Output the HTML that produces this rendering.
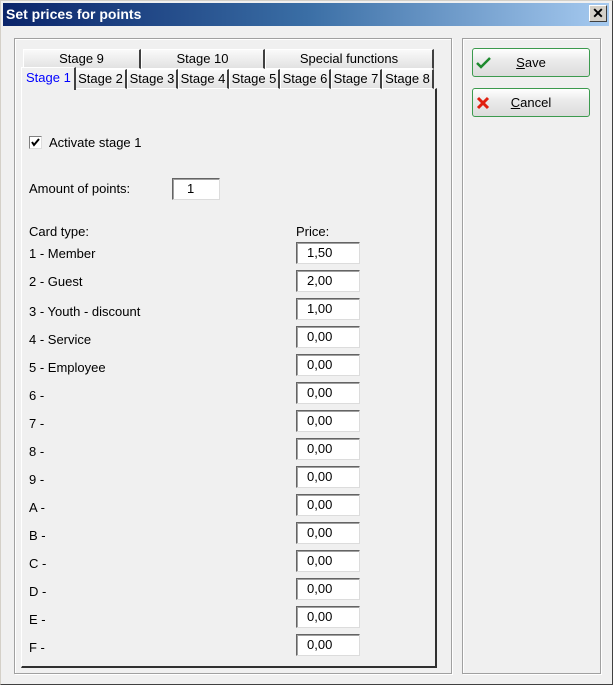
<!DOCTYPE html>
<html><head><style>
*{margin:0;padding:0;box-sizing:border-box}
body{width:613px;height:685px;background:#d4d0c8;font-family:"Liberation Sans",sans-serif;font-size:13px;color:#000;position:relative;overflow:hidden}
.a{position:absolute}
#win{left:0;top:0;width:613px;height:685px;background:#f0f0f0;border:1px solid #d4d0c8;border-right-color:#404040;border-bottom-color:#404040}
#title{left:3px;top:3px;width:606px;height:23px;background:linear-gradient(to right,#0a246a,#3a6ea5 50%,#a6caf0);color:#fff;font-weight:bold;font-size:14px;line-height:23px;padding-left:3px}
#close{left:589px;top:5px;width:18px;height:17px;background:#d4d0c8;border:1px solid #fff;border-right-color:#404040;border-bottom-color:#404040;color:#000;font-size:14px;font-weight:bold;text-align:center;line-height:14px}
.etch{border:1px solid #a0a0a0;box-shadow:1px 1px 0 #fff inset,1px 1px 0 #fff}
.tab{height:20px;background:linear-gradient(#fafafa,#e2e2e2);border:1px solid #fff;border-right:2px solid #404040;text-align:center;line-height:18px;font-size:13px;white-space:nowrap}
#page{left:21px;top:88px;width:416px;height:580px;border:1px solid #fff;border-right:2px solid #303030;border-bottom:2px solid #303030;background:#f0f0f0}
.inp{position:absolute;background:#fff;border:1px solid #dcdcdc;border-top-color:#646464;border-left-color:#646464;box-shadow:1px 1px 0 #a0a0a0 inset;font-size:13px;line-height:20px}
.lbl{position:absolute;left:29px;font-size:13px}
.btn{position:absolute;left:472px;width:118px;height:29px;border:1px solid #3c9a4e;border-radius:3px;background:linear-gradient(#fff,#ececec 40%,#dcdcdc);text-align:center;line-height:27px;font-size:13px}
</style></head><body>
<div id="win" class="a"></div>
<div id="title" class="a">Set prices for points</div>
<div id="close" class="a">✕</div>
<div class="a etch" style="left:14px;top:38px;width:438px;height:636px"></div>
<div class="a etch" style="left:462px;top:38px;width:139px;height:636px"></div>

<div class="a tab" style="left:23px;top:49px;width:118px">Stage 9</div>
<div class="a tab" style="left:141px;top:49px;width:124px">Stage 10</div>
<div class="a tab" style="left:265px;top:49px;width:169px">Special functions</div>
<div id="page" class="a"></div>
<div class="a tab" style="left:75px;top:69px;width:52px">Stage 2</div>
<div class="a tab" style="left:127px;top:69px;width:51px">Stage 3</div>
<div class="a tab" style="left:178px;top:69px;width:51px">Stage 4</div>
<div class="a tab" style="left:229px;top:69px;width:51px">Stage 5</div>
<div class="a tab" style="left:280px;top:69px;width:51px">Stage 6</div>
<div class="a tab" style="left:331px;top:69px;width:51px">Stage 7</div>
<div class="a tab" style="left:382px;top:69px;width:52px">Stage 8</div>
<div class="a" style="left:21px;top:67px;width:55px;height:23px;background:#f0f0f0;border:1px solid #fff;border-bottom:none;border-right:2px solid #404040;color:#0000ff;line-height:20px;padding-left:4px;white-space:nowrap">Stage 1</div>

<div class="a" style="left:29px;top:136px;width:13px;height:13px;background:#fff;border:1px solid #808080;border-right-color:#ddd;border-bottom-color:#ddd"><svg width="11" height="11" style="position:absolute;left:0;top:0"><path d="M2 5 L4 8 L9 2" stroke="#000" stroke-width="2" fill="none"/></svg></div>
<div class="lbl" style="left:49px;top:135px">Activate stage 1</div>
<div class="lbl" style="top:181px">Amount of points:</div>
<div class="inp" style="left:172px;top:178px;width:48px;height:22px;padding-left:14px">1</div>
<div class="lbl" style="top:224px">Card type:</div>
<div class="lbl" style="left:296px;top:224px">Price:</div>

<div class="lbl" style="top:246px">1 - Member</div><div class="inp" style="left:296px;top:242px;width:64px;height:22px;padding-left:10px">1,50</div>
<div class="lbl" style="top:274px">2 - Guest</div><div class="inp" style="left:296px;top:270px;width:64px;height:22px;padding-left:10px">2,00</div>
<div class="lbl" style="top:304px">3 - Youth - discount</div><div class="inp" style="left:296px;top:298px;width:64px;height:22px;padding-left:10px">1,00</div>
<div class="lbl" style="top:332px">4 - Service</div><div class="inp" style="left:296px;top:326px;width:64px;height:22px;padding-left:10px">0,00</div>
<div class="lbl" style="top:360px">5 - Employee</div><div class="inp" style="left:296px;top:354px;width:64px;height:22px;padding-left:10px">0,00</div>
<div class="lbl" style="top:388px">6 -</div><div class="inp" style="left:296px;top:382px;width:64px;height:22px;padding-left:10px">0,00</div>
<div class="lbl" style="top:416px">7 -</div><div class="inp" style="left:296px;top:410px;width:64px;height:22px;padding-left:10px">0,00</div>
<div class="lbl" style="top:444px">8 -</div><div class="inp" style="left:296px;top:438px;width:64px;height:22px;padding-left:10px">0,00</div>
<div class="lbl" style="top:472px">9 -</div><div class="inp" style="left:296px;top:466px;width:64px;height:22px;padding-left:10px">0,00</div>
<div class="lbl" style="top:500px">A -</div><div class="inp" style="left:296px;top:494px;width:64px;height:22px;padding-left:10px">0,00</div>
<div class="lbl" style="top:528px">B -</div><div class="inp" style="left:296px;top:522px;width:64px;height:22px;padding-left:10px">0,00</div>
<div class="lbl" style="top:556px">C -</div><div class="inp" style="left:296px;top:550px;width:64px;height:22px;padding-left:10px">0,00</div>
<div class="lbl" style="top:584px">D -</div><div class="inp" style="left:296px;top:578px;width:64px;height:22px;padding-left:10px">0,00</div>
<div class="lbl" style="top:612px">E -</div><div class="inp" style="left:296px;top:606px;width:64px;height:22px;padding-left:10px">0,00</div>
<div class="lbl" style="top:640px">F -</div><div class="inp" style="left:296px;top:634px;width:64px;height:22px;padding-left:10px">0,00</div>

<div class="btn" style="top:48px"><svg width="16" height="14" style="position:absolute;left:3px;top:7px"><path d="M1 7 L5 11 L14 2" stroke="#1e8a2e" stroke-width="2.5" fill="none"/></svg><span style="text-decoration:underline">S</span>ave</div>
<div class="btn" style="top:88px"><svg width="14" height="14" style="position:absolute;left:3px;top:7px"><path d="M2 2 L12 12 M12 2 L2 12" stroke="#e02010" stroke-width="3" fill="none"/></svg><span style="text-decoration:underline">C</span>ancel</div>
</body></html>
